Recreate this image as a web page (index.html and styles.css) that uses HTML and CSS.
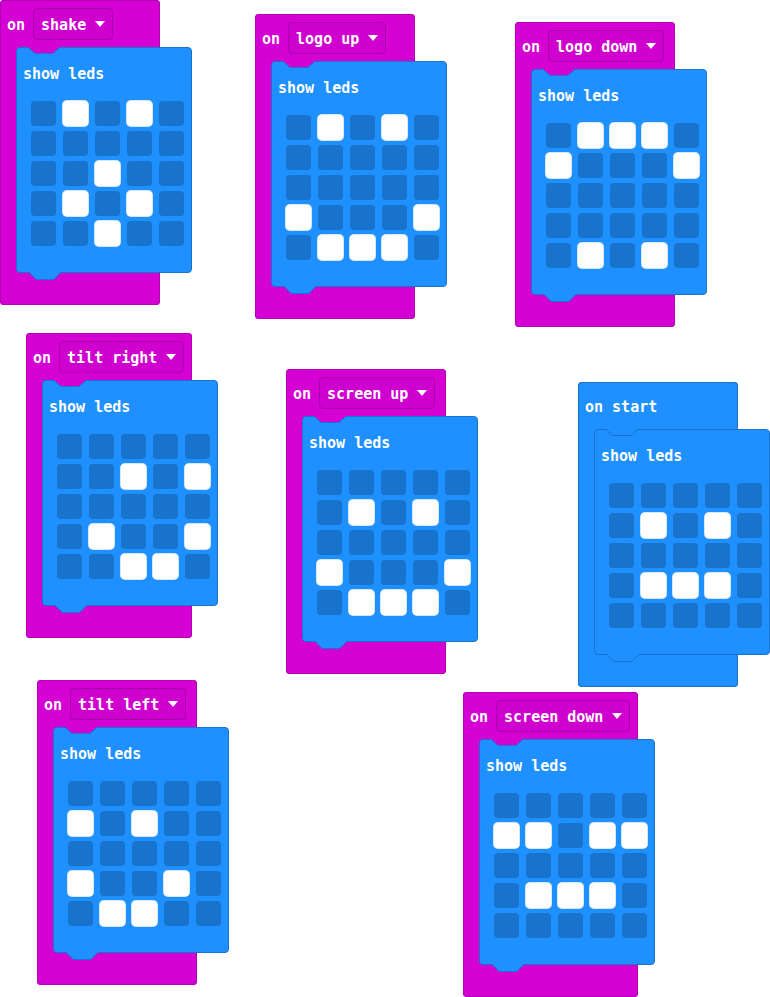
FILE: index.html
```html
<!DOCTYPE html>
<html lang="en">
<head>
    <meta charset="UTF-8">
    <meta name="viewport" content="width=device-width, initial-scale=1.0">
    <title>show leds</title>
    <link rel="stylesheet" href="styles.css">
</head>
<body>

<div class="workspace">

    <div class="hat pos-shake">
        <div class="head"><span class="label">on</span><span class="drop">shake<i class="caret"></i></span></div>
        <div class="leds">
            <div class="title">show leds</div>
            <div class="grid">
                <i></i><i class="on"></i><i></i><i class="on"></i><i></i>
                <i></i><i></i><i></i><i></i><i></i>
                <i></i><i></i><i class="on"></i><i></i><i></i>
                <i></i><i class="on"></i><i></i><i class="on"></i><i></i>
                <i></i><i></i><i class="on"></i><i></i><i></i>
            </div>
        </div>
    </div>

    <div class="hat pos-logo-up">
        <div class="head"><span class="label">on</span><span class="drop">logo up<i class="caret"></i></span></div>
        <div class="leds">
            <div class="title">show leds</div>
            <div class="grid">
                <i></i><i class="on"></i><i></i><i class="on"></i><i></i>
                <i></i><i></i><i></i><i></i><i></i>
                <i></i><i></i><i></i><i></i><i></i>
                <i class="on"></i><i></i><i></i><i></i><i class="on"></i>
                <i></i><i class="on"></i><i class="on"></i><i class="on"></i><i></i>
            </div>
        </div>
    </div>

    <div class="hat pos-logo-down">
        <div class="head"><span class="label">on</span><span class="drop">logo down<i class="caret"></i></span></div>
        <div class="leds">
            <div class="title">show leds</div>
            <div class="grid">
                <i></i><i class="on"></i><i class="on"></i><i class="on"></i><i></i>
                <i class="on"></i><i></i><i></i><i></i><i class="on"></i>
                <i></i><i></i><i></i><i></i><i></i>
                <i></i><i></i><i></i><i></i><i></i>
                <i></i><i class="on"></i><i></i><i class="on"></i><i></i>
            </div>
        </div>
    </div>

    <div class="hat pos-tilt-right">
        <div class="head"><span class="label">on</span><span class="drop">tilt right<i class="caret"></i></span></div>
        <div class="leds">
            <div class="title">show leds</div>
            <div class="grid">
                <i></i><i></i><i></i><i></i><i></i>
                <i></i><i></i><i class="on"></i><i></i><i class="on"></i>
                <i></i><i></i><i></i><i></i><i></i>
                <i></i><i class="on"></i><i></i><i></i><i class="on"></i>
                <i></i><i></i><i class="on"></i><i class="on"></i><i></i>
            </div>
        </div>
    </div>

    <div class="hat pos-screen-up">
        <div class="head"><span class="label">on</span><span class="drop">screen up<i class="caret"></i></span></div>
        <div class="leds">
            <div class="title">show leds</div>
            <div class="grid">
                <i></i><i></i><i></i><i></i><i></i>
                <i></i><i class="on"></i><i></i><i class="on"></i><i></i>
                <i></i><i></i><i></i><i></i><i></i>
                <i class="on"></i><i></i><i></i><i></i><i class="on"></i>
                <i></i><i class="on"></i><i class="on"></i><i class="on"></i><i></i>
            </div>
        </div>
    </div>

    <div class="hat start pos-start">
        <div class="head"><span class="label">on start</span></div>
        <div class="leds">
            <div class="title">show leds</div>
            <div class="grid">
                <i></i><i></i><i></i><i></i><i></i>
                <i></i><i class="on"></i><i></i><i class="on"></i><i></i>
                <i></i><i></i><i></i><i></i><i></i>
                <i></i><i class="on"></i><i class="on"></i><i class="on"></i><i></i>
                <i></i><i></i><i></i><i></i><i></i>
            </div>
        </div>
    </div>

    <div class="hat pos-tilt-left">
        <div class="head"><span class="label">on</span><span class="drop">tilt left<i class="caret"></i></span></div>
        <div class="leds">
            <div class="title">show leds</div>
            <div class="grid">
                <i></i><i></i><i></i><i></i><i></i>
                <i class="on"></i><i></i><i class="on"></i><i></i><i></i>
                <i></i><i></i><i></i><i></i><i></i>
                <i class="on"></i><i></i><i></i><i class="on"></i><i></i>
                <i></i><i class="on"></i><i class="on"></i><i></i><i></i>
            </div>
        </div>
    </div>

    <div class="hat pos-screen-down">
        <div class="head"><span class="label">on</span><span class="drop">screen down<i class="caret"></i></span></div>
        <div class="leds">
            <div class="title">show leds</div>
            <div class="grid">
                <i></i><i></i><i></i><i></i><i></i>
                <i class="on"></i><i class="on"></i><i></i><i class="on"></i><i class="on"></i>
                <i></i><i></i><i></i><i></i><i></i>
                <i></i><i class="on"></i><i class="on"></i><i class="on"></i><i></i>
                <i></i><i></i><i></i><i></i><i></i>
            </div>
        </div>
    </div>

</div>

</body>
</html>
```

FILE: styles.css
```css
body {
    margin: 0;
    background: #fff;
    font-family: "DejaVu Sans Mono", "Liberation Mono", monospace;
}

.workspace {
    position: relative;
    width: 770px;
    height: 997px;
    overflow: hidden;
}

/* event block (C shape) */
.hat {
    position: absolute;
    box-sizing: border-box;
    min-width: 160px;
    padding-bottom: 32px;
    background: #d400d4;
    border-radius: 4px;
    box-shadow: inset 0 0 0 1px #b400b4;
    color: #fff;
    font-size: 15px;
    font-weight: bold;
}

.hat.start {
    background: #1e90ff;
    box-shadow: inset 0 0 0 1px #1873cc;
}

.head {
    display: flex;
    align-items: center;
    gap: 8px;
    height: 47px;
    box-sizing: border-box;
    padding: 1px 8px 0 7px;
    line-height: 20px;
    white-space: nowrap;
}

.label {
    padding-top: 2px;
}

.drop {
    display: flex;
    align-items: center;
    gap: 9px;
    height: 32px;
    box-sizing: border-box;
    padding: 2px 7px 0;
    border: 1px solid #a800a8;
    border-radius: 4px;
    background: #cf00cf;
}

.caret {
    width: 0;
    height: 0;
    margin-top: -2px;
    border-left: 5px solid transparent;
    border-right: 5px solid transparent;
    border-top: 6px solid #fff;
}

/* show leds block */
.leds {
    position: relative;
    box-sizing: border-box;
    width: 176px;
    height: 226px;
    margin: 0 -32px 0 16px;
    padding-top: 16px;
    background: #1e90ff;
    border: 1px solid #1873cc;
    border-radius: 4px;
}

.leds::before {
    content: "";
    position: absolute;
    top: -1px;
    left: 10px;
    width: 34px;
    height: 7px;
    background: url("data:image/svg+xml,%3Csvg xmlns='http://www.w3.org/2000/svg' width='34' height='7'%3E%3Cpath d='M1 0 L8 6 H26 L33 0Z' fill='%23d400d4'/%3E%3Cpath d='M0 .5 H1.2 L7.8 6.5 H26.2 L32.8 .5 H34' fill='none' stroke='%231873cc'/%3E%3C/svg%3E");
}

.start .leds::before {
    background: url("data:image/svg+xml,%3Csvg xmlns='http://www.w3.org/2000/svg' width='34' height='7'%3E%3Cpath d='M1 0 L8 6 H26 L33 0Z' fill='%231e90ff'/%3E%3Cpath d='M0 .5 H1.2 L7.8 6.5 H26.2 L32.8 .5 H34' fill='none' stroke='%231873cc'/%3E%3C/svg%3E");
}

.leds::after {
    content: "";
    position: absolute;
    top: 100%;
    left: 11px;
    width: 34px;
    height: 8px;
    background: url("data:image/svg+xml,%3Csvg xmlns='http://www.w3.org/2000/svg' width='34' height='8'%3E%3Cpath d='M1 0 L8 7 H26 L33 0Z' fill='%231e90ff'/%3E%3Cpath d='M.5 0 L7.8 7.5 H26.2 L33.5 0' fill='none' stroke='%231873cc'/%3E%3C/svg%3E");
}

.title {
    padding-left: 6px;
    line-height: 20px;
}

.grid {
    display: grid;
    grid-template-columns: repeat(5, 25px);
    grid-auto-rows: 25px;
    gap: 5px 7px;
    margin: 17px 0 0 14px;
}

.grid i {
    border-radius: 4px;
    background: #1873cc;
}

.grid i.on {
    background: #fff;
    box-shadow: 0 0 0 1px #d6e6f7;
}

.pos-shake { left: 0; top: 0; }
.pos-logo-up { left: 255px; top: 14px; }
.pos-logo-down { left: 515px; top: 22px; }
.pos-tilt-right { left: 26px; top: 333px; }
.pos-screen-up { left: 286px; top: 369px; }
.pos-start { left: 578px; top: 382px; }
.pos-tilt-left { left: 37px; top: 680px; }
.pos-screen-down { left: 463px; top: 692px; }
```
